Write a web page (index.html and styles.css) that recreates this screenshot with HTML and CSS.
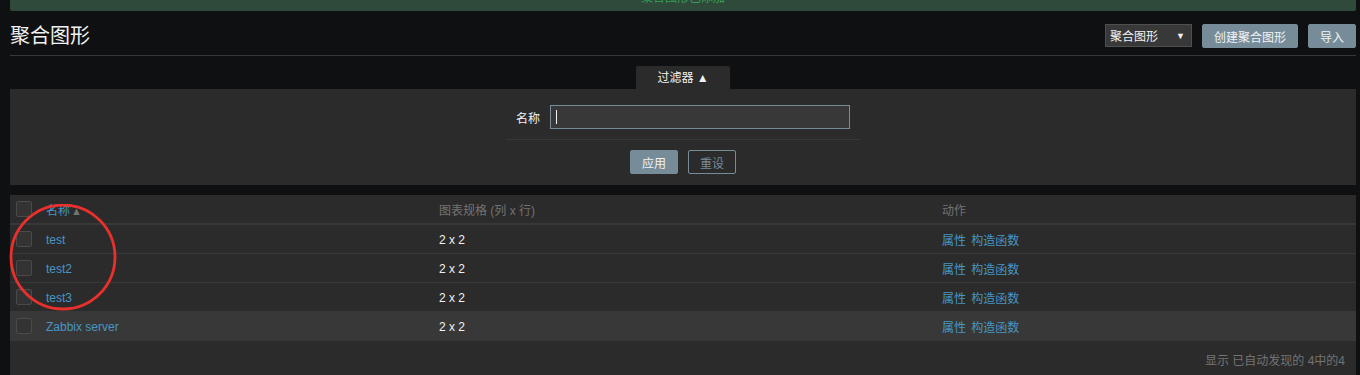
FILE: index.html
```html
<!DOCTYPE html>
<html lang="zh-CN">
<head>
  <meta charset="UTF-8">
  <title>聚合图形</title>
  <link rel="stylesheet" href="styles.css">
</head>
<body>

  <div class="msg-good"><span>聚合图形已添加</span></div>

  <div class="header">
    <h1>聚合图形</h1>
    <div class="controls">
      <div class="select">聚合图形 <span class="arrow">&#9660;</span></div>
      <button class="btn">创建聚合图形</button>
      <button class="btn">导入</button>
    </div>
  </div>

  <div class="filter">
    <div class="filter-tabs">
      <div class="filter-tab">过滤器 &#9650;</div>
    </div>
    <div class="filter-body">
      <div class="filter-row">
        <label for="name">名称</label>
        <div class="filter-input"><span class="caret"></span></div>
      </div>
      <div class="filter-buttons">
        <button class="btn">应用</button>
        <button class="btn btn-alt">重设</button>
      </div>
    </div>
  </div>

  <div class="list">
    <table>
      <colgroup>
        <col class="c-check">
        <col class="c-name">
        <col class="c-spec">
        <col>
      </colgroup>
      <thead>
        <tr>
          <th><span class="check"></span></th>
          <th><a href="#">名称</a><span class="sort">&#9650;</span></th>
          <th>图表规格 (列 x 行)</th>
          <th>动作</th>
        </tr>
      </thead>
      <tbody>
        <tr>
          <td><span class="check"></span></td>
          <td><a href="#">test</a></td>
          <td>2 x 2</td>
          <td><a href="#">属性</a> <a href="#" class="next">构造函数</a></td>
        </tr>
        <tr>
          <td><span class="check"></span></td>
          <td><a href="#">test2</a></td>
          <td>2 x 2</td>
          <td><a href="#">属性</a> <a href="#" class="next">构造函数</a></td>
        </tr>
        <tr>
          <td><span class="check"></span></td>
          <td><a href="#">test3</a></td>
          <td>2 x 2</td>
          <td><a href="#">属性</a> <a href="#" class="next">构造函数</a></td>
        </tr>
        <tr class="hover">
          <td><span class="check"></span></td>
          <td><a href="#">Zabbix server</a></td>
          <td>2 x 2</td>
          <td><a href="#">属性</a> <a href="#" class="next">构造函数</a></td>
        </tr>
      </tbody>
    </table>
    <div class="paging">显示 已自动发现的 4中的4</div>

    <!-- annotation drawn over the list -->
    <svg class="mark" width="112" height="112" viewBox="0 0 112 112">
      <ellipse cx="54" cy="53" rx="52" ry="52" fill="none" stroke="#e8302c" stroke-width="2.8"/>
    </svg>
  </div>

</body>
</html>
```

FILE: styles.css
```css
body {
  margin: 0;
  padding: 0 4px 0 10px;
  background: #0e1012;
  font-family: Arial, "Liberation Sans", "Noto Sans CJK SC", sans-serif;
  font-size: 12px;
  color: #f2f2f2;
  overflow: hidden;
}

.msg-good {
  height: 11px;
  overflow: hidden;
  background: #2f4a3b;
  border-radius: 0 0 2px 2px;
  text-align: center;
}

.msg-good span {
  display: block;
  margin-top: -9px;
  line-height: 14px;
  color: #34a058;
}

.header {
  display: flex;
  justify-content: space-between;
  align-items: center;
  padding: 13px 0 7px;
  border-bottom: 1px solid #383838;
}

h1 {
  margin: 0;
  font-size: 20px;
  font-weight: normal;
  line-height: 24px;
  color: #f2f2f2;
}

.controls {
  display: flex;
  gap: 10px;
}

.select {
  width: 87px;
  height: 23px;
  box-sizing: border-box;
  display: flex;
  align-items: center;
  justify-content: space-between;
  padding: 0 6px 0 4px;
  background: #383838;
  border: 1px solid #4f4f4f;
  color: #f2f2f2;
}

.select .arrow {
  font-size: 9px;
}

.btn {
  height: 24px;
  padding: 0 11px;
  font-family: inherit;
  font-size: 12px;
  color: #f2f2f2;
  background: #768d99;
  border: 1px solid #768d99;
  border-radius: 2px;
  cursor: pointer;
}

.btn-alt {
  background: transparent;
  color: #768d99;
}

.filter {
  margin-top: 10px;
}

.filter-tabs {
  display: flex;
  justify-content: center;
}

.filter-tab {
  width: 94px;
  height: 23px;
  line-height: 25px;
  text-align: center;
  background: #2b2b2b;
  border-radius: 2px 2px 0 0;
  color: #f2f2f2;
}

.filter-body {
  background: #2b2b2b;
  padding: 16px 0 11px;
  display: flex;
  flex-direction: column;
  align-items: center;
}

.filter-row {
  display: flex;
  align-items: center;
  gap: 10px;
  width: 354px;
  justify-content: flex-end;
  padding-bottom: 10px;
  border-bottom: 1px solid #383838;
}

.filter-row label {
  color: #f2f2f2;
}

.filter-input {
  width: 300px;
  height: 24px;
  box-sizing: border-box;
  display: flex;
  align-items: center;
  background: #383838;
  border: 1px solid #768d99;
  padding: 0 5px;
  margin-right: 10px;
}

.caret {
  width: 1px;
  height: 14px;
  background: #f2f2f2;
}

.filter-buttons {
  display: flex;
  gap: 10px;
  margin-top: 10px;
}

.list {
  position: relative;
  margin-top: 10px;
  background: #2b2b2b;
}

table {
  width: 100%;
  border-collapse: collapse;
  table-layout: fixed;
}

.c-check { width: 30px; }
.c-name { width: 393px; }
.c-spec { width: 503px; }

th, td {
  text-align: left;
  padding: 1px 6px 0;
  height: 27px;
  font-weight: normal;
}

th {
  color: #737373;
  border-bottom: 2px solid #383838;
}

td {
  border-bottom: 1px solid #383838;
  color: #f2f2f2;
}

tr.hover td {
  background: #383838;
  border-bottom-color: #383838;
}

a {
  color: #4796c4;
  text-decoration: none;
}

a.next {
  margin-left: 2px;
}

.sort {
  color: #737373;
  font-size: 11px;
  margin-left: 1px;
}

.check {
  display: block;
  width: 14px;
  height: 14px;
  margin-top: -1px;
  border: 1px solid #4a4a4a;
  border-radius: 2px;
  background: #333333;
}

.paging {
  text-align: right;
  padding: 10px 11px 13px;
  color: #737373;
}

.mark {
  position: absolute;
  left: -1px;
  top: 9px;
}
```
